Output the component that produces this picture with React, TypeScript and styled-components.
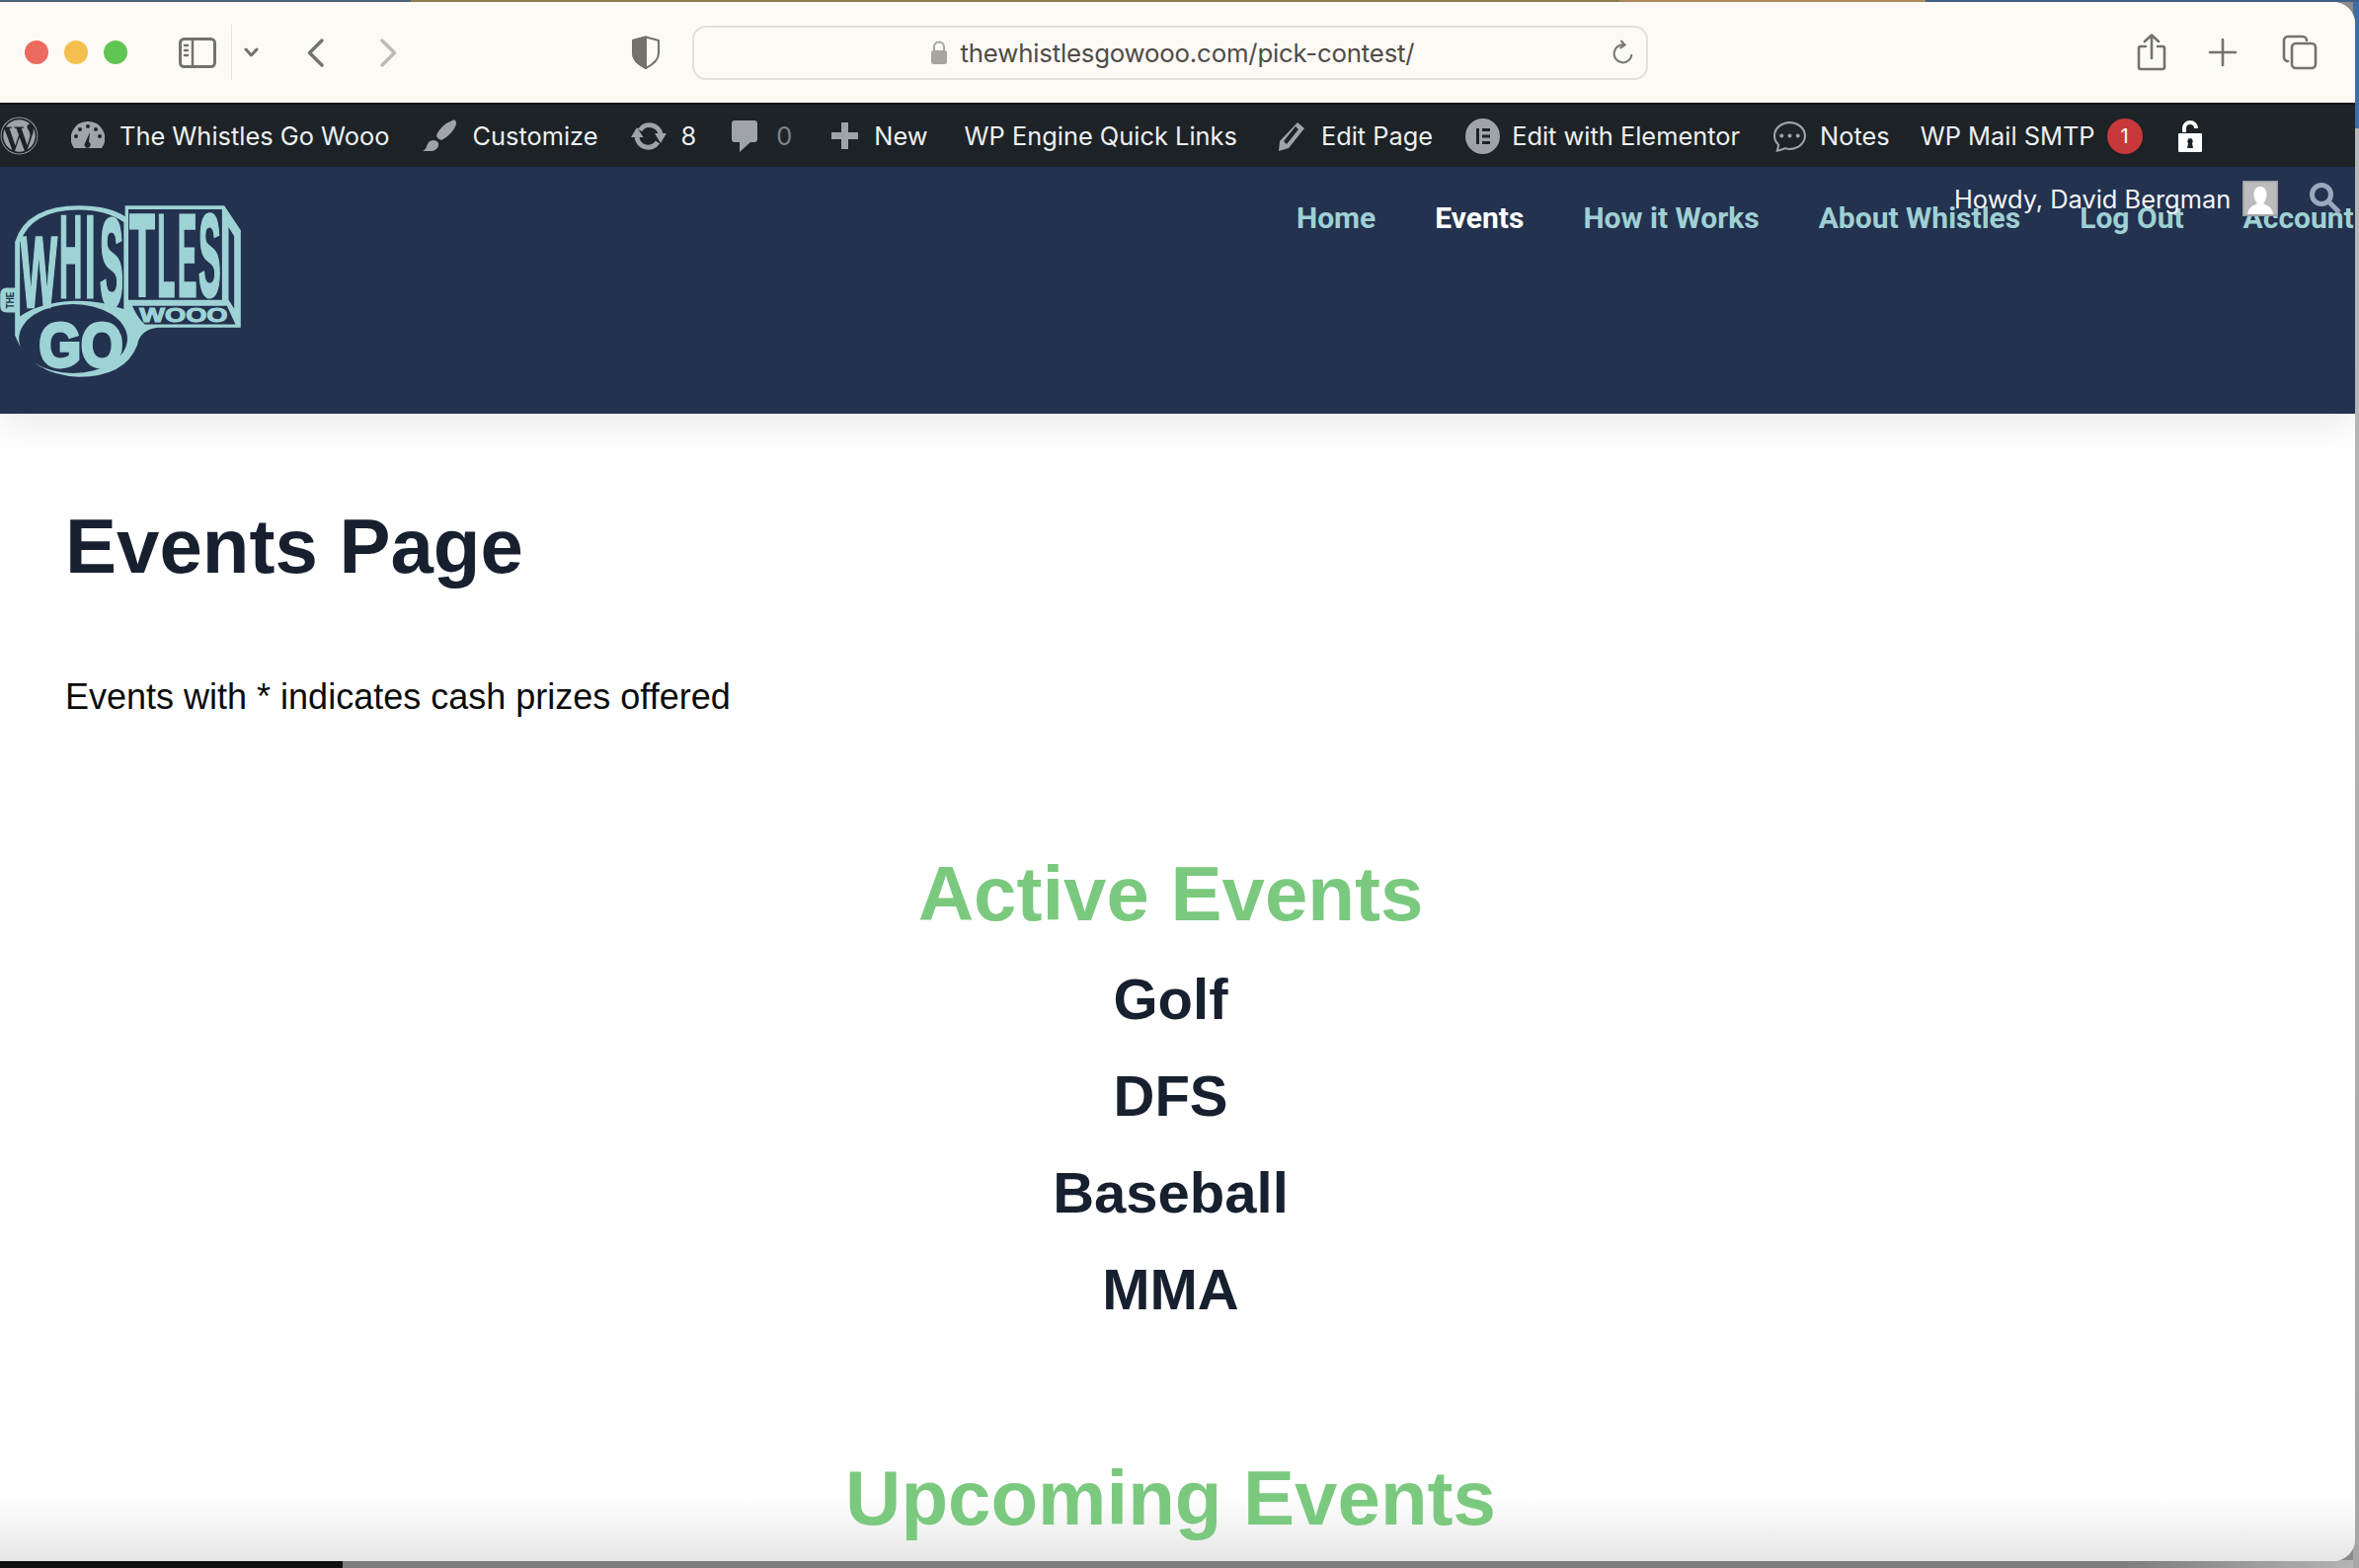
import React from "react";
import styled, { createGlobalStyle } from "styled-components";
import { FaWordpress } from "react-icons/fa";
import { BsChatDots } from "react-icons/bs";

const GlobalStyle = createGlobalStyle`
  html, body { margin: 0; padding: 0; background: #8a8a8a; }
  * { box-sizing: border-box; }
`;

const Desktop = styled.div`
  position: relative;
  width: 2389px;
  height: 1588px;
  overflow: hidden;
  padding-top: 2px;
  background:
    linear-gradient(90deg, #4a6378 0 416px, #8b7d4e 416px 1640px, #a98a58 1640px 1950px, #3f5f86 1950px) top / 100% 2px no-repeat,
    linear-gradient(90deg, #3f6da3, #3f6da3) right top / 6px 130px no-repeat,
    linear-gradient(180deg, #b9b9b9, #a4a4a4) right 130px / 6px 100% no-repeat,
    linear-gradient(90deg, #111 0 347px, #7d7d7d 347px 2150px, #b5b5b5) bottom / 100% 8px no-repeat;
`;

const Window = styled.div`
  position: relative;
  width: 2385px;
  height: 1579px;
  border-radius: 0 22px 22px 0;
  overflow: hidden;
  background: #fff;
  display: flex;
  flex-direction: column;
  &::after {
    content: "";
    position: absolute;
    left: 0;
    right: 0;
    bottom: 0;
    height: 66px;
    background: linear-gradient(180deg, rgba(228, 228, 228, 0), #e6e6e6);
    pointer-events: none;
  }
`;

const Chrome = styled.div`
  height: 104px;
  flex: none;
  background: #fdf9f5;
  border-bottom: 2px solid #141414;
  display: flex;
  align-items: center;
  padding: 0 0 0 25px;
`;

const Light = styled.span<{ $color: string }>`
  width: 24px;
  height: 24px;
  border-radius: 50%;
  background: ${(p) => p.$color};
  margin-right: 16px;
  flex: none;
`;

const ChromeIcon = styled.svg<{ $left: number }>`
  flex: none;
  margin-left: ${(p) => p.$left}px;
  fill: none;
  stroke: #75716c;
  stroke-width: 3;
  stroke-linecap: round;
  stroke-linejoin: round;
`;

const Divider = styled.span`
  width: 1px;
  height: 56px;
  background: #e6e2de;
  margin-left: 15px;
  flex: none;
`;

const UrlBar = styled.div`
  width: 968px;
  height: 55px;
  flex: none;
  margin-left: 33px;
  padding-left: 4px;
  border: 2px solid #e3dfda;
  border-radius: 14px;
  display: flex;
  align-items: center;
  justify-content: center;
  position: relative;
`;

const UrlText = styled.span`
  font: 400 25.8px "Inter", "Liberation Sans", sans-serif;
  color: #4f4b47;
  margin-left: 13px;
  letter-spacing: -0.2px;
  white-space: nowrap;
`;

const Reload = styled.svg`
  position: absolute;
  right: 12px;
  top: 11px;
  fill: none;
  stroke: #75716c;
  stroke-width: 2;
`;

const AdminBar = styled.nav`
  height: 63px;
  flex: none;
  background: #1d2327;
  display: flex;
  align-items: center;
  font: 400 25.4px "Inter", "Liberation Sans", sans-serif;
  color: #eef0f1;
  white-space: nowrap;
`;

const BarItem = styled.span<{ $left: number; $gap?: number }>`
  display: inline-flex;
  align-items: center;
  flex: none;
  margin-left: ${(p) => p.$left}px;
  gap: ${(p) => p.$gap ?? 15}px;
  svg { flex: none; color: #a0a3a8; fill: currentColor; }
`;

const Muted = styled.span`
  color: #7f8387;
`;

const Badge = styled.span`
  width: 36px;
  height: 36px;
  margin-left: 12px;
  border-radius: 50%;
  background: #c8393a;
  color: #fff;
  font-size: 20px;
  display: flex;
  align-items: center;
  justify-content: center;
  flex: none;
`;

const SiteHeader = styled.header`
  position: relative;
  z-index: 1;
  height: 250px;
  flex: none;
  background: #23324f;
  box-shadow: 0 8px 40px rgba(0, 0, 0, 0.1);
  display: flex;
  align-items: flex-start;
  padding: 1px 0 0;
`;

const LogoMark = styled.svg`
  flex: none;
`;

const MainNav = styled.div`
  display: flex;
  gap: 60px;
  margin: 27px 0 0 1063px;
  height: 46px;
  align-items: center;
  white-space: nowrap;
`;

const NavLink = styled.a<{ $active?: boolean }>`
  font: 700 30px "Roboto", "Liberation Sans", sans-serif;
  color: ${(p) => (p.$active ? "#ffffff" : "#9fd0d3")};
`;

const UserBlock = styled.div`
  position: absolute;
  top: 14px;
  left: 1979px;
  display: flex;
  align-items: center;
  font: 400 25.4px "Inter", "Liberation Sans", sans-serif;
  color: #f4f6f7;
  white-space: nowrap;
`;

const Avatar = styled.svg`
  margin-left: 12px;
  flex: none;
`;

const SearchGlyph = styled.svg`
  margin-left: 31px;
  flex: none;
  fill: none;
  stroke: #9aa7bd;
  stroke-width: 5;
`;

const Main = styled.main`
  position: relative;
  z-index: 1;
  flex: 1;
  padding: 0 80px 0 66px;
  font-family: "Liberation Sans", Arial, sans-serif;
  color: #17202f;
`;

const PageTitle = styled.h1`
  margin: 98px 0 0;
  height: 72px;
  font-size: 78px;
  line-height: 72px;
  font-weight: 700;
`;

const Intro = styled.p`
  margin: 95px 0 0;
  height: 44px;
  font-size: 36px;
  line-height: 44px;
  color: #0b0b0b;
`;

const SectionTitle = styled.h2<{ $top: number }>`
  margin: ${(p) => p.$top}px 0 0;
  height: 86px;
  line-height: 86px;
  font-size: 78px;
  font-weight: 700;
  text-align: center;
  color: #7bc97f;
`;

const SportList = styled.div`
  display: flex;
  flex-direction: column;
  margin-top: 15px;
`;

const Sport = styled.h3`
  margin: 0;
  height: 98px;
  line-height: 98px;
  font-size: 58px;
  font-weight: 700;
  text-align: center;
`;

const LogoLetter = styled.text<{ $weight: number }>`
  font-family: "Liberation Sans", sans-serif;
  font-weight: 700;
  fill: #9ed3d5;
  stroke: #9ed3d5;
  stroke-width: ${(p) => p.$weight}px;
`;

const wLetters = [
  { ch: "W", x: 62, w: 112, top: 205, bottom: 425 },
  { ch: "H", x: 180, w: 70, top: 138, bottom: 395 },
  { ch: "I", x: 258, w: 32, top: 138, bottom: 395 },
  { ch: "S", x: 303, w: 72, top: 150, bottom: 420 },
  { ch: "T", x: 393, w: 78, top: 135, bottom: 392 },
  { ch: "L", x: 478, w: 54, top: 135, bottom: 392 },
  { ch: "E", x: 540, w: 58, top: 135, bottom: 392 },
  { ch: "S", x: 603, w: 68, top: 135, bottom: 392 },
];

const Logo = () => (
  <LogoMark width="250" height="213" viewBox="0 0 750 640">
    <path d="M0 385 Q0 365 20 365 H60 V440 H20 Q0 440 0 420Z" fill="#9ed3d5" />
    <text transform="translate(42 428) rotate(-90)" fontFamily="Liberation Sans" fontWeight="700" fontSize="32" fill="#23324f" textLength="50" lengthAdjust="spacingAndGlyphs">THE</text>
    <path d="M45 225 Q80 115 240 115 Q330 115 380 148 V115 H682 L732 190 V486 H480 Q425 492 417 540 Q380 635 240 636 Q90 630 45 510Z" fill="#9ed3d5" />
    <path d="M60 228 Q95 128 240 128 Q320 128 376 165 V430 Q300 402 225 405 Q120 410 60 452Z" fill="#23324f" />
    <path d="M390 126 H675 V402 H390Z M695 180 L712 208 V428 L695 402Z" fill="#23324f" />
    <path d="M402 420 H690 L716 476 H440Q420 460 402 420Z" fill="#23324f" />
    <ellipse cx="222" cy="520" rx="165" ry="105" fill="#23324f" />
    {wLetters.map((l, i) => (
      <LogoLetter
        key={i}
        $weight={2.5}
        transform={`translate(${l.x} ${l.bottom}) scale(1 ${(l.bottom - l.top) / 71.6})`}
        fontSize="100"
        textLength={l.w}
        lengthAdjust="spacingAndGlyphs"
      >
        {l.ch}
      </LogoLetter>
    ))}
    <LogoLetter $weight={6} transform="translate(118 604) scale(1 1.92)" fontSize="100" textLength="256" lengthAdjust="spacingAndGlyphs">GO</LogoLetter>
    <LogoLetter $weight={3} transform="translate(424 468)" fontSize="58" textLength="268" lengthAdjust="spacingAndGlyphs">WOOO</LogoLetter>
  </LogoMark>
);

export default function App() {
  return (
    <>
      <GlobalStyle />
      <Desktop>
        <Window>
          <Chrome>
            <Light $color="#ec6a5e" />
            <Light $color="#f4bf4f" />
            <Light $color="#61c554" />
            <ChromeIcon $left={36} width="38" height="31" viewBox="0 0 38 31">
              <rect x="1.5" y="1.5" width="35" height="28" rx="4" />
              <path d="M14 2V29M6 8h3M6 13h3M6 18h3" strokeWidth="2.5" />
            </ChromeIcon>
            <Divider />
            <ChromeIcon $left={12} width="15" height="10" viewBox="0 0 15 10">
              <path d="M2 2l5.5 6L13 2" />
            </ChromeIcon>
            <ChromeIcon $left={49} width="17" height="29" viewBox="0 0 17 29" style={{ strokeWidth: 3.4 }}>
              <path d="M15 2L2.5 14.5 15 27" />
            </ChromeIcon>
            <ChromeIcon $left={57} width="17" height="29" viewBox="0 0 17 29" style={{ stroke: "#bdbab6", strokeWidth: 3.4 }}>
              <path d="M2 2l12.5 12.5L2 27" />
            </ChromeIcon>
            <ChromeIcon $left={238} width="28" height="34" viewBox="0 0 28 34" style={{ strokeWidth: 2 }}>
              <path d="M14 1.5L27 5v13c0 7-6 11.5-13 15C7 29.500 1 25 1 18V5z" />
              <path d="M14 1.500L1 5v13c0 7 6 11.500 13 15z" fill="#75716c" />
            </ChromeIcon>
            <UrlBar>
              <svg width="18" height="24" viewBox="0 0 18 24">
                <path d="M4 10V6.500a5 5 0 0 1 10 0V10" fill="none" stroke="#a8a4a0" strokeWidth="2" />
                <rect x="1" y="10" width="16" height="14" rx="2.500" fill="#a8a4a0" />
              </svg>
              <UrlText>thewhistlesgowooo.com/pick-contest/</UrlText>
              <Reload width="24" height="30" viewBox="0 0 24 30">
                <path d="M14 6.500a9 9 0 1 0 7.500 9.500" />
                <path d="M10.500 2l4 4.500-5 3.500" />
              </Reload>
            </UrlBar>
            <ChromeIcon $left={495} width="30" height="38" viewBox="0 0 30 38" style={{ strokeWidth: 2.6 }}>
              <path d="M9 13H4a2 2 0 0 0-2 2v19a2 2 0 0 0 2 2h22a2 2 0 0 0 2-2V15a2 2 0 0 0-2-2h-5M15 25V2M8 8l7-6.500L22 8" />
            </ChromeIcon>
            <ChromeIcon $left={42} width="30" height="30" viewBox="0 0 30 30" style={{ strokeWidth: 2.6 }}>
              <path d="M15 2v26M2 15h26" />
            </ChromeIcon>
            <ChromeIcon $left={45} width="36" height="36" viewBox="0 0 36 36" style={{ strokeWidth: 2.6 }}>
              <path d="M6 27a4 4 0 0 1-4-4V6a4 4 0 0 1 4-4h15a4 4 0 0 1 4 4" />
              <rect x="10" y="9" width="24" height="25" rx="4" />
            </ChromeIcon>
          </Chrome>

          <AdminBar>
            <BarItem $left={0}>
              <FaWordpress size={39} />
            </BarItem>
            <BarItem $left={33}>
              <svg width="34" height="30" viewBox="0 0 34 30">
                <path d="M17 0a17 17 0 0 1 14 27H3A17 17 0 0 1 17 0z" />
                <g fill="#1d2327">
                  <circle cx="17" cy="5" r="2" />
                  <circle cx="9" cy="8" r="2" />
                  <circle cx="25" cy="8" r="2" />
                  <circle cx="5" cy="15" r="2" />
                  <circle cx="29" cy="15" r="2" />
                  <path d="M19 11l-1 10a3 3 0 1 1-4 1z" />
                </g>
              </svg>
              The Whistles Go Wooo
            </BarItem>
            <BarItem $left={34}>
              <svg width="35" height="33" viewBox="0 0 35 33">
                <path d="M33 1c2 2 1 6-3 11-3 4-7 7-11 9-3-1-5-3-5-5 2-5 8-12 14-14 2-1 4-2 5-1z" />
                <path d="M11 21c2 0 4 1 5 3 1 4-3 8-7 8H0c4-2 4-5 5-7 1-3 4-4 6-4z" />
              </svg>
              Customize
            </BarItem>
            <BarItem $left={33} $gap={15}>
              <svg width="36" height="28" viewBox="0 0 36 28">
                <path d="M9 8A11.500 11.500 0 0 1 30 12M27 20A11.500 11.500 0 0 1 6 15" fill="none" stroke="currentColor" strokeWidth="5" />
                <path d="M6 5l6.500 10H0zM30 21l-6-10h12z" />
              </svg>
              8
            </BarItem>
            <BarItem $left={36} $gap={19}>
              <svg width="26" height="32" viewBox="0 0 26 32">
                <path d="M3 0h20a3 3 0 0 1 3 3v16a3 3 0 0 1-3 3h-4l-11 10V22H3a3 3 0 0 1-3-3V3a3 3 0 0 1 3-3z" />
              </svg>
              <Muted>0</Muted>
            </BarItem>
            <BarItem $left={40} $gap={16}>
              <svg width="27" height="27" viewBox="0 0 27 27">
                <path d="M10 0h7v10h10v7H17v10h-7V17H0v-7h10z" />
              </svg>
              New
            </BarItem>
            <BarItem $left={37}>WP Engine Quick Links</BarItem>
            <BarItem $left={41} $gap={16}>
              <svg width="28" height="30" viewBox="0 0 28 30">
                <path d="M20 1l7 6L11 27 1 30l1-10z M6 20l3 3 12-15-3-3z" fillRule="evenodd" />
              </svg>
              Edit Page
            </BarItem>
            <BarItem $left={33} $gap={12}>
              <svg width="35" height="36" viewBox="0 0 35 36">
                <path fillRule="evenodd" d="M17.500 0a17.500 18 0 1 1 0 36 17.500 18 0 0 1 0-36zM11 10v16h3V10zM17 10v3h8v-3zM17 16.500v3h8v-3zM17 23v3h8v-3z" />
              </svg>
              Edit with Elementor
            </BarItem>
            <BarItem $left={34} $gap={14}>
              <BsChatDots size={33} />
              Notes
            </BarItem>
            <BarItem $left={31}>WP Mail SMTP</BarItem>
            <Badge>1</Badge>
            <BarItem $left={36}>
              <svg width="24" height="32" viewBox="0 0 24 32" style={{ color: "#fff" }}>
                <path fill="none" stroke="#fff" strokeWidth="4" d="M6 12V8a6 6 0 0 1 12 0" />
                <path fillRule="evenodd" d="M1 13h22a1 1 0 0 1 1 1v17a1 1 0 0 1-1 1H1a1 1 0 0 1-1-1V14a1 1 0 0 1 1-1zM12 18a3 3 0 0 0-2 5l-1 5h6l-1-5a3 3 0 0 0-2-5z" />
              </svg>
            </BarItem>
          </AdminBar>

          <SiteHeader>
            <Logo />
            <MainNav>
              <NavLink>Home</NavLink>
              <NavLink $active>Events</NavLink>
              <NavLink>How it Works</NavLink>
              <NavLink>About Whistles</NavLink>
              <NavLink>Log Out</NavLink>
              <NavLink>Account</NavLink>
            </MainNav>
            <UserBlock>
              Howdy, David Bergman
              <Avatar width="36" height="36" viewBox="0 0 36 36">
                <rect width="36" height="36" fill="#bcbcbc" stroke="#9b9ea3" strokeWidth="3" />
                <path d="M18 6c4 0 6.500 3.500 6.500 8S22 22 21 23c3 2 9 3 10 11H5c1-8 7-9 10-11-1-1-3.500-4.500-3.500-9S14 6 18 6z" fill="#fff" />
              </Avatar>
              <SearchGlyph width="34" height="32" viewBox="0 0 34 32">
                <circle cx="13" cy="12" r="9.500" />
                <path d="M20 19l11 11" />
              </SearchGlyph>
            </UserBlock>
          </SiteHeader>

          <Main>
            <PageTitle>Events Page</PageTitle>
            <Intro>Events with * indicates cash prizes offered</Intro>
            <SectionTitle $top={134}>Active Events</SectionTitle>
            <SportList>
              <Sport>Golf</Sport>
              <Sport>DFS</Sport>
              <Sport>Baseball</Sport>
              <Sport>MMA</Sport>
            </SportList>
            <SectionTitle $top={119}>Upcoming Events</SectionTitle>
          </Main>
        </Window>
      </Desktop>
    </>
  );
}
